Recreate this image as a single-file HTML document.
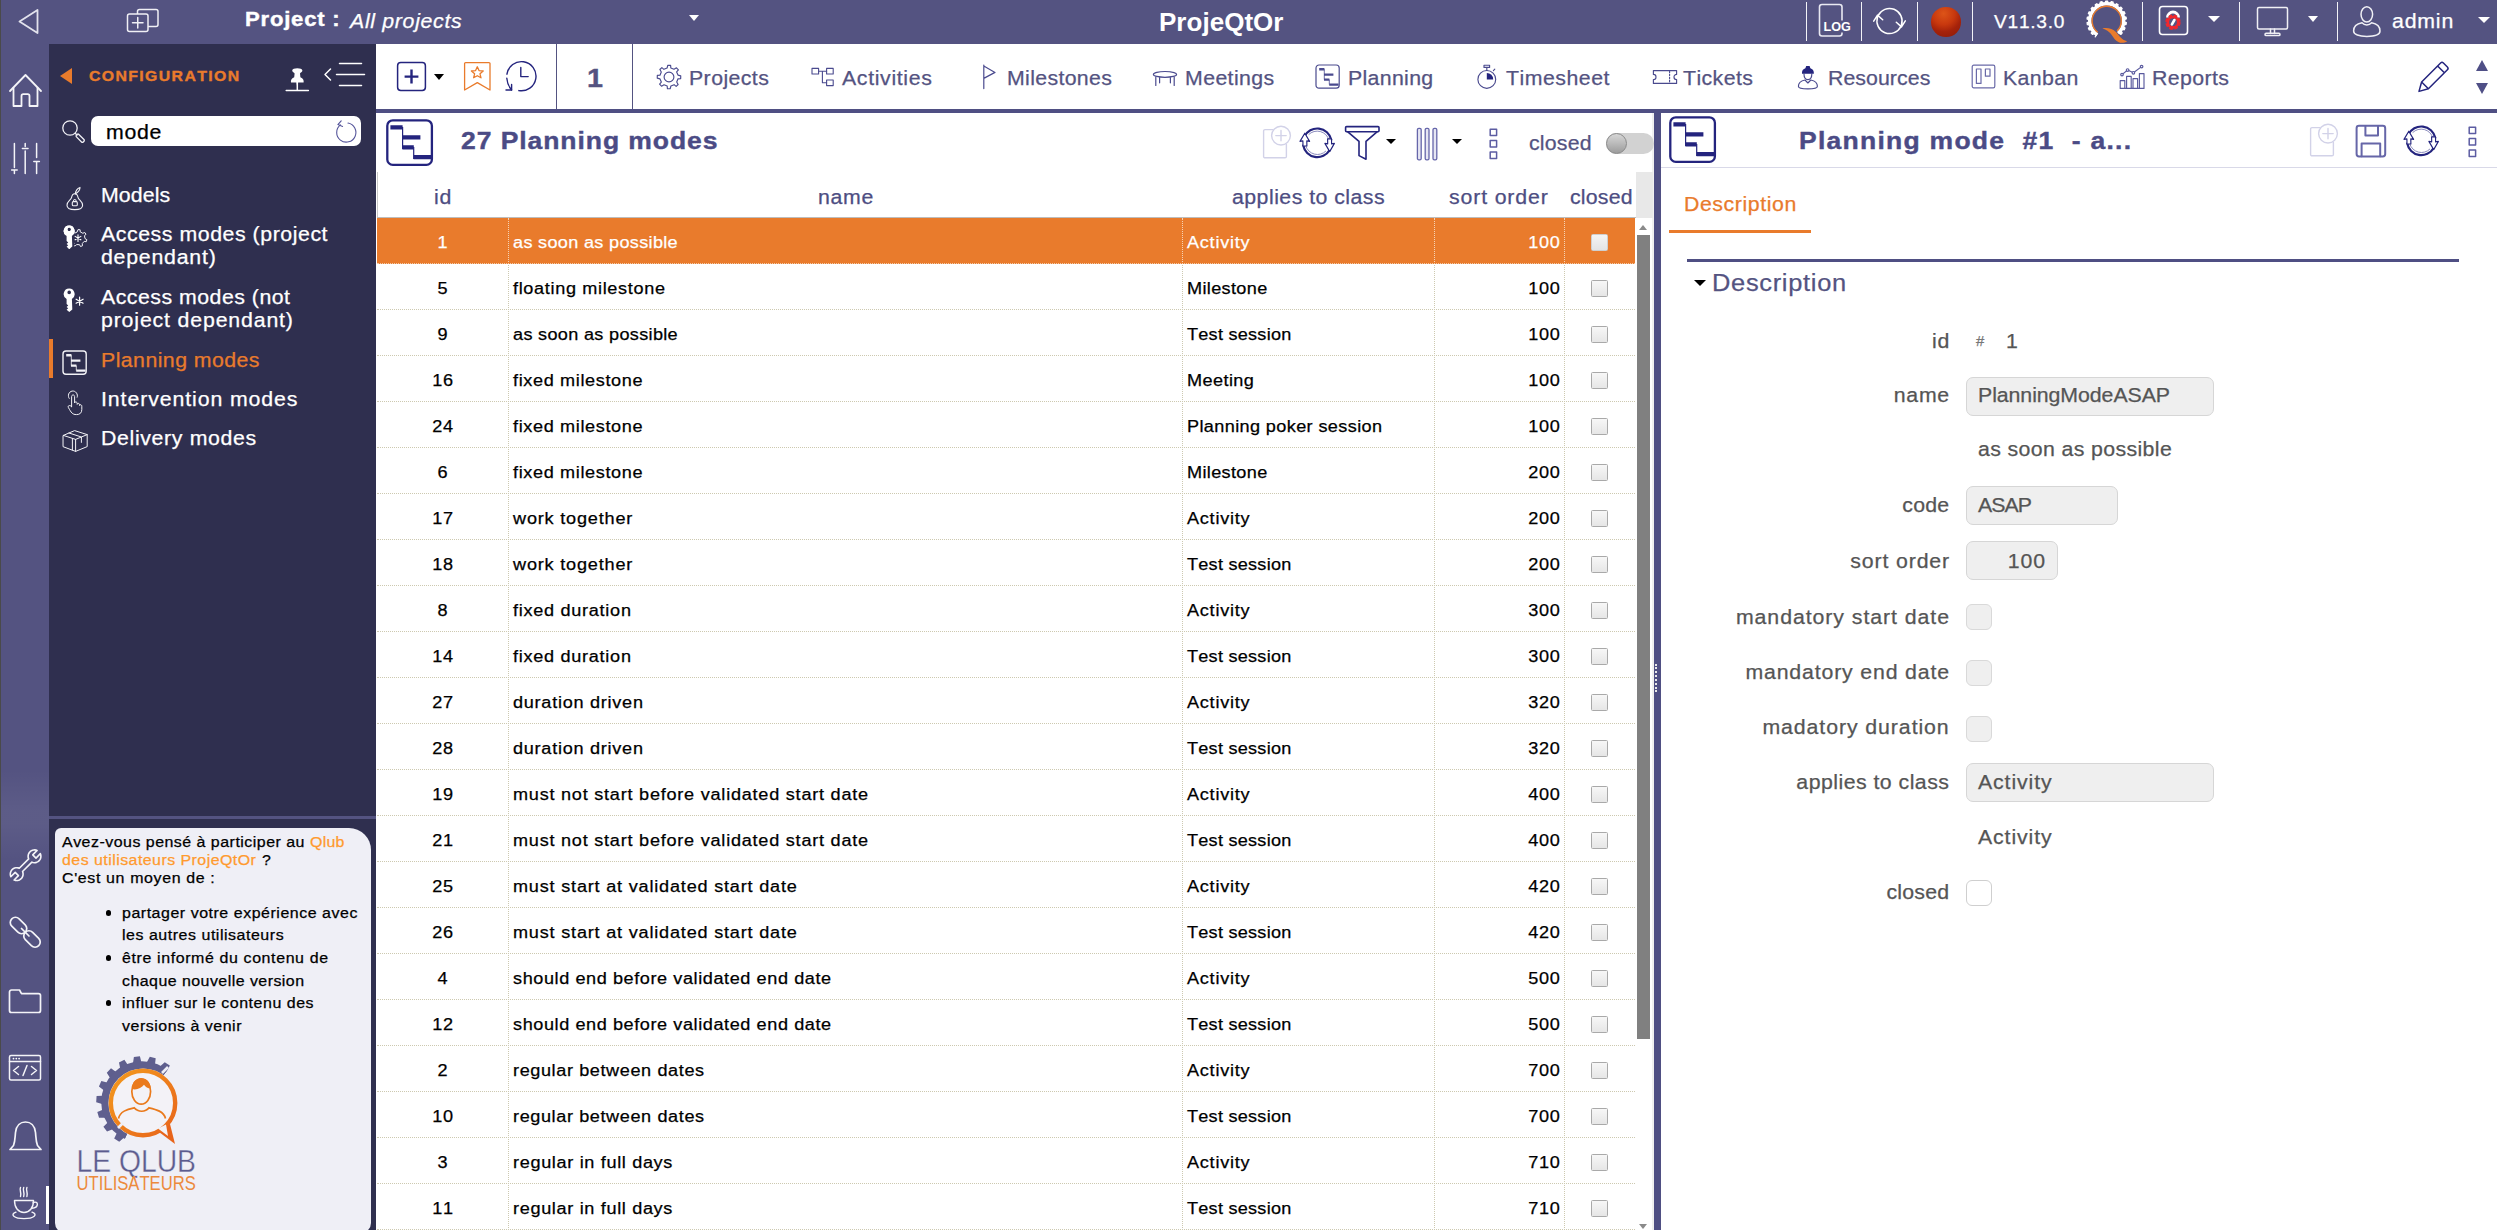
<!DOCTYPE html>
<html><head><meta charset="utf-8"><title>ProjeQtOr</title><style>
html,body{margin:0;padding:0;}
body{width:2497px;height:1230px;overflow:hidden;background:#fff;position:relative;font-family:"Liberation Sans",sans-serif;font-kerning:none;}
div,span,svg{position:absolute;box-sizing:border-box;}
span{white-space:nowrap;line-height:1em;}
</style></head><body>
<div style="left:0px;top:0px;width:2497px;height:44px;background:#545381;"></div>
<div style="left:0px;top:44px;width:49px;height:1186px;background:#545381;"></div>
<div style="left:1px;top:770px;width:48px;height:90px;background:linear-gradient(to bottom,rgba(255,255,255,0),rgba(255,255,255,0.05) 45%,rgba(255,255,255,0.05) 60%,rgba(255,255,255,0));"></div>
<div style="left:0px;top:0px;width:1px;height:1230px;background:#4a4a4a;"></div>
<div style="left:49px;top:44px;width:327px;height:1186px;background:#2f2f4f;"></div>
<div style="left:376px;top:44px;width:2121px;height:65px;background:#fff;"></div>
<div style="left:376px;top:109px;width:2121px;height:4px;background:#4f4f83;"></div>
<div style="left:556px;top:44px;width:1px;height:65px;background:#545381;"></div>
<div style="left:632px;top:44px;width:1px;height:65px;background:#545381;"></div>
<div style="left:1654px;top:113px;width:7px;height:1117px;background:#4f4f83;"></div>
<div style="left:1652px;top:113px;width:2px;height:1117px;background:#f0f0f0;"></div>
<div style="left:1655px;top:664px;width:2px;height:28px;border-left:2px dotted #e8e8e8;"></div>
<span id="t1" style="top:9.09px;font-size:20.1px;color:#fff;font-weight:bold;-webkit-text-stroke:0.4px;letter-spacing:0.706px;left:244.50px;transform:scaleX(1.1);transform-origin:0 0;">Project :</span>
<span id="t2" style="top:10.69px;font-size:20.1px;color:#fff;-webkit-text-stroke:0.25px;font-style:italic;letter-spacing:0.642px;left:349.70px;transform:scaleX(1.06);transform-origin:0 0;">All projects</span>
<span id="t3" style="top:8.69px;font-size:26px;color:#fff;font-weight:bold;letter-spacing:0.028px;left:1159.00px;">ProjeQtOr</span>
<span id="t4" style="top:13.29px;font-size:18.09px;color:#fff;-webkit-text-stroke:0.25px;letter-spacing:0.693px;left:1994.10px;transform:scaleX(1.06);transform-origin:0 0;">V11.3.0</span>
<span id="t5" style="top:11.09px;font-size:20.1px;color:#fff;-webkit-text-stroke:0.25px;letter-spacing:0.766px;left:2392.30px;transform:scaleX(1.06);transform-origin:0 0;">admin</span>
<div style="left:1806px;top:2px;width:1.2px;height:39px;background:#f2f2f7;"></div>
<div style="left:1861px;top:2px;width:1.2px;height:39px;background:#f2f2f7;"></div>
<div style="left:1917px;top:2px;width:1.2px;height:39px;background:#f2f2f7;"></div>
<div style="left:1972px;top:2px;width:1.2px;height:39px;background:#f2f2f7;"></div>
<div style="left:2142px;top:2px;width:1.2px;height:39px;background:#f2f2f7;"></div>
<div style="left:2239px;top:2px;width:1.2px;height:39px;background:#f2f2f7;"></div>
<div style="left:2337px;top:2px;width:1.2px;height:39px;background:#f2f2f7;"></div>
<span id="t6" style="top:68.85px;font-size:14px;color:#e97b2c;font-weight:bold;letter-spacing:1.219px;left:88.60px;transform:scaleX(1.13);transform-origin:0 0;-webkit-text-stroke:0.35px;">CONFIGURATION</span>
<div style="left:91px;top:116px;width:270px;height:30px;background:#fff;border-radius:7px;"></div>
<span id="t7" style="top:122.09px;font-size:20.1px;color:#000;-webkit-text-stroke:0.25px;letter-spacing:0.636px;left:105.50px;transform:scaleX(1.06);transform-origin:0 0;">mode</span>
<span id="t8" style="top:184.59px;font-size:20.1px;color:#fff;-webkit-text-stroke:0.25px;letter-spacing:0.096px;left:101.30px;transform:scaleX(1.06);transform-origin:0 0;">Models</span>
<span id="t9" style="top:223.59px;font-size:20.1px;color:#fff;-webkit-text-stroke:0.25px;letter-spacing:0.523px;left:101.30px;transform:scaleX(1.06);transform-origin:0 0;">Access modes (project</span>
<span id="t10" style="top:247.29px;font-size:20.1px;color:#fff;-webkit-text-stroke:0.25px;letter-spacing:0.729px;left:101.30px;transform:scaleX(1.06);transform-origin:0 0;">dependant)</span>
<span id="t11" style="top:286.69px;font-size:20.1px;color:#fff;-webkit-text-stroke:0.25px;letter-spacing:0.466px;left:101.30px;transform:scaleX(1.06);transform-origin:0 0;">Access modes (not</span>
<span id="t12" style="top:310.39px;font-size:20.1px;color:#fff;-webkit-text-stroke:0.25px;letter-spacing:0.795px;left:101.30px;transform:scaleX(1.06);transform-origin:0 0;">project dependant)</span>
<span id="t13" style="top:349.69px;font-size:20.1px;color:#e97b2c;-webkit-text-stroke:0.25px;letter-spacing:0.415px;left:101.30px;transform:scaleX(1.06);transform-origin:0 0;">Planning modes</span>
<span id="t14" style="top:388.69px;font-size:20.1px;color:#fff;-webkit-text-stroke:0.25px;letter-spacing:0.853px;left:101.30px;transform:scaleX(1.06);transform-origin:0 0;">Intervention modes</span>
<span id="t15" style="top:427.69px;font-size:20.1px;color:#fff;-webkit-text-stroke:0.25px;letter-spacing:0.613px;left:101.30px;transform:scaleX(1.06);transform-origin:0 0;">Delivery modes</span>
<div style="left:49px;top:339px;width:4px;height:39px;background:#e97b2c;"></div>
<div style="left:49px;top:816px;width:327px;height:3px;background:#545381;"></div>
<div style="left:55px;top:828px;width:316px;height:404.5px;background:#efeff6;border-radius:6px 22px 10px 10px;"></div>
<span id="t16" style="top:834.14px;font-size:15.07px;color:#000;-webkit-text-stroke:0.25px;letter-spacing:0.453px;left:61.85px;transform:scaleX(1.06);transform-origin:0 0;white-space:pre;">Avez-vous pensé à participer au </span>
<span id="t17" style="top:834.14px;font-size:15.07px;color:#ff9a2e;-webkit-text-stroke:0.25px;letter-spacing:0.240px;left:309.77px;transform:scaleX(1.06);transform-origin:0 0;">Qlub</span>
<span id="t18" style="top:852.04px;font-size:15.07px;color:#ff9a2e;-webkit-text-stroke:0.25px;letter-spacing:0.420px;left:61.85px;transform:scaleX(1.06);transform-origin:0 0;">des utilisateurs ProjeQtOr</span>
<span id="t19" style="top:852.04px;font-size:15.07px;color:#000;-webkit-text-stroke:0.25px;letter-spacing:-0.678px;left:261.50px;transform:scaleX(1.06);transform-origin:0 0;">?</span>
<span id="t20" style="top:870.34px;font-size:15.07px;color:#000;-webkit-text-stroke:0.25px;letter-spacing:0.590px;left:61.85px;transform:scaleX(1.06);transform-origin:0 0;">C&#x27;est un moyen de :</span>
<span id="t21" style="top:904.74px;font-size:15.07px;color:#000;-webkit-text-stroke:0.25px;letter-spacing:0.497px;left:122.25px;transform:scaleX(1.06);transform-origin:0 0;">partager votre expérience avec</span>
<div style="left:105.7px;top:909.8px;width:5.8px;height:5.8px;background:#000;border-radius:50%;"></div>
<span id="t22" style="top:927.39px;font-size:15.07px;color:#000;-webkit-text-stroke:0.25px;letter-spacing:0.499px;left:122.25px;transform:scaleX(1.06);transform-origin:0 0;">les autres utilisateurs</span>
<span id="t23" style="top:950.04px;font-size:15.07px;color:#000;-webkit-text-stroke:0.25px;letter-spacing:0.573px;left:122.25px;transform:scaleX(1.06);transform-origin:0 0;">être informé du contenu de</span>
<div style="left:105.7px;top:955.0999999999999px;width:5.8px;height:5.8px;background:#000;border-radius:50%;"></div>
<span id="t24" style="top:972.69px;font-size:15.07px;color:#000;-webkit-text-stroke:0.25px;letter-spacing:0.422px;left:122.25px;transform:scaleX(1.06);transform-origin:0 0;">chaque nouvelle version</span>
<span id="t25" style="top:995.34px;font-size:15.07px;color:#000;-webkit-text-stroke:0.25px;letter-spacing:0.496px;left:122.25px;transform:scaleX(1.06);transform-origin:0 0;">influer sur le contenu des</span>
<div style="left:105.7px;top:1000.4px;width:5.8px;height:5.8px;background:#000;border-radius:50%;"></div>
<span id="t26" style="top:1017.99px;font-size:15.07px;color:#000;-webkit-text-stroke:0.25px;letter-spacing:0.481px;left:122.25px;transform:scaleX(1.06);transform-origin:0 0;">versions à venir</span>
<div style="left:46px;top:1186px;width:3px;height:38px;background:#fff;"></div>
<span id="t27" style="top:64.98px;font-size:26.13px;color:#545381;font-weight:bold;-webkit-text-stroke:0.4px;letter-spacing:2.274px;left:587.00px;transform:scaleX(1.1);transform-origin:0 0;">1</span>
<span id="t28" style="top:67.59px;font-size:20.1px;color:#545381;-webkit-text-stroke:0.25px;letter-spacing:0.390px;left:688.50px;transform:scaleX(1.06);transform-origin:0 0;">Projects</span>
<span id="t29" style="top:67.59px;font-size:20.1px;color:#545381;-webkit-text-stroke:0.25px;letter-spacing:0.608px;left:842.00px;transform:scaleX(1.06);transform-origin:0 0;">Activities</span>
<span id="t30" style="top:67.59px;font-size:20.1px;color:#545381;-webkit-text-stroke:0.25px;letter-spacing:0.318px;left:1006.70px;transform:scaleX(1.06);transform-origin:0 0;">Milestones</span>
<span id="t31" style="top:67.59px;font-size:20.1px;color:#545381;-webkit-text-stroke:0.25px;letter-spacing:0.373px;left:1185.00px;transform:scaleX(1.06);transform-origin:0 0;">Meetings</span>
<span id="t32" style="top:67.59px;font-size:20.1px;color:#545381;-webkit-text-stroke:0.25px;letter-spacing:0.303px;left:1348.40px;transform:scaleX(1.06);transform-origin:0 0;">Planning</span>
<span id="t33" style="top:67.59px;font-size:20.1px;color:#545381;-webkit-text-stroke:0.25px;letter-spacing:0.476px;left:1506.00px;transform:scaleX(1.06);transform-origin:0 0;">Timesheet</span>
<span id="t34" style="top:67.59px;font-size:20.1px;color:#545381;-webkit-text-stroke:0.25px;letter-spacing:0.380px;left:1683.40px;transform:scaleX(1.06);transform-origin:0 0;">Tickets</span>
<span id="t35" style="top:67.59px;font-size:20.1px;color:#545381;-webkit-text-stroke:0.25px;letter-spacing:0.056px;left:1828.00px;transform:scaleX(1.06);transform-origin:0 0;">Resources</span>
<span id="t36" style="top:67.59px;font-size:20.1px;color:#545381;-webkit-text-stroke:0.25px;letter-spacing:0.352px;left:2003.00px;transform:scaleX(1.06);transform-origin:0 0;">Kanban</span>
<span id="t37" style="top:67.59px;font-size:20.1px;color:#545381;-webkit-text-stroke:0.25px;letter-spacing:0.361px;left:2151.60px;transform:scaleX(1.06);transform-origin:0 0;">Reports</span>
<span id="t38" style="top:128.98px;font-size:24.12px;color:#4b4b85;font-weight:bold;-webkit-text-stroke:0.4px;letter-spacing:0.843px;left:461.10px;transform:scaleX(1.1);transform-origin:0 0;">27 Planning modes</span>
<span id="t39" style="top:133.09px;font-size:20.1px;color:#545381;-webkit-text-stroke:0.25px;letter-spacing:0.198px;left:1528.60px;transform:scaleX(1.06);transform-origin:0 0;">closed</span>
<div style="left:1606px;top:133px;width:47.5px;height:21px;background:#d2d2d2;border-radius:11px;"></div>
<div style="left:1606px;top:133px;width:21px;height:21px;background:linear-gradient(#d6d6d6,#bdbdbd 45%,#9c9c9c);border-radius:50%;border:1px solid #8a8a8a;"></div>
<span id="t40" style="top:187.29px;font-size:20.1px;color:#4d4d82;-webkit-text-stroke:0.25px;letter-spacing:0.642px;left:242.84px;width:400px;text-align:center;transform:scaleX(1.06);transform-origin:50% 0;">id</span>
<span id="t41" style="top:187.29px;font-size:20.1px;color:#4d4d82;-webkit-text-stroke:0.25px;letter-spacing:0.655px;left:645.85px;width:400px;text-align:center;transform:scaleX(1.06);transform-origin:50% 0;">name</span>
<span id="t42" style="top:187.09px;font-size:20.1px;color:#4d4d82;-webkit-text-stroke:0.25px;letter-spacing:0.440px;left:1231.80px;transform:scaleX(1.06);transform-origin:0 0;">applies to class</span>
<span id="t43" style="top:187.09px;font-size:20.1px;color:#4d4d82;-webkit-text-stroke:0.25px;letter-spacing:0.798px;left:1449.00px;transform:scaleX(1.06);transform-origin:0 0;">sort order</span>
<span id="t44" style="top:187.09px;font-size:20.1px;color:#4d4d82;-webkit-text-stroke:0.25px;letter-spacing:0.198px;left:1569.60px;transform:scaleX(1.06);transform-origin:0 0;">closed</span>
<div style="left:377px;top:172px;width:1px;height:46px;background:#c8c8c8;"></div>
<div style="left:377px;top:217px;width:1259px;height:1px;background:#bdbdbd;"></div>
<div style="left:1636px;top:172px;width:17px;height:46px;background:#e8e8e8;"></div>
<div style="left:1637px;top:235px;width:13px;height:804px;background:#808080;"></div>
<div style="left:1639px;top:225px;width:0;height:0;border-left:4.5px solid transparent;border-right:4.5px solid transparent;border-bottom:5px solid #8a8a8a;"></div>
<div style="left:1639px;top:1223.6px;width:0;height:0;border-left:4.5px solid transparent;border-right:4.5px solid transparent;border-top:5px solid #8a8a8a;"></div>
<div style="left:377px;top:218px;width:1258px;height:46px;background:#e97b2c;"></div>
<div style="left:377px;top:263px;width:1257.5px;height:1px;border-top:1px dotted #f3c9a6;"></div>
<span id="t45" style="top:233.64px;font-size:17.08px;color:#fff;-webkit-text-stroke:0.25px;letter-spacing:0.700px;left:242.87px;width:400px;text-align:center;transform:scaleX(1.06);transform-origin:50% 0;">1</span>
<span id="t46" style="top:233.64px;font-size:17.08px;color:#fff;-webkit-text-stroke:0.25px;letter-spacing:0.298px;left:512.55px;transform:scaleX(1.06);transform-origin:0 0;">as soon as possible</span>
<span id="t47" style="top:233.64px;font-size:17.08px;color:#fff;-webkit-text-stroke:0.25px;letter-spacing:0.706px;left:1187.15px;transform:scaleX(1.06);transform-origin:0 0;">Activity</span>
<span id="t48" style="top:233.64px;font-size:17.08px;color:#fff;-webkit-text-stroke:0.25px;letter-spacing:0.700px;right:936.41px;transform:scaleX(1.06);transform-origin:100% 0;">100</span>
<div style="left:1591px;top:234px;width:17px;height:17px;background:linear-gradient(#f4f4f4,#e4e4e4);border:1.5px solid #cfcfcf;border-radius:1.5px;"></div>
<div style="left:377px;top:309px;width:1257.5px;height:1px;border-top:1px dotted #cdc9b0;"></div>
<span id="t49" style="top:279.64px;font-size:17.08px;color:#000;-webkit-text-stroke:0.25px;letter-spacing:0.700px;left:242.87px;width:400px;text-align:center;transform:scaleX(1.06);transform-origin:50% 0;">5</span>
<span id="t50" style="top:279.64px;font-size:17.08px;color:#000;-webkit-text-stroke:0.25px;letter-spacing:0.616px;left:512.55px;transform:scaleX(1.06);transform-origin:0 0;">floating milestone</span>
<span id="t51" style="top:279.64px;font-size:17.08px;color:#000;-webkit-text-stroke:0.25px;letter-spacing:0.321px;left:1187.15px;transform:scaleX(1.06);transform-origin:0 0;">Milestone</span>
<span id="t52" style="top:279.64px;font-size:17.08px;color:#000;-webkit-text-stroke:0.25px;letter-spacing:0.700px;right:936.41px;transform:scaleX(1.06);transform-origin:100% 0;">100</span>
<div style="left:1591px;top:280px;width:17px;height:17px;background:linear-gradient(#f7f7f7,#e6e6e6);border:1.5px solid #a9a9a9;border-radius:1.5px;"></div>
<div style="left:377px;top:355px;width:1257.5px;height:1px;border-top:1px dotted #cdc9b0;"></div>
<span id="t53" style="top:325.64px;font-size:17.08px;color:#000;-webkit-text-stroke:0.25px;letter-spacing:0.700px;left:242.87px;width:400px;text-align:center;transform:scaleX(1.06);transform-origin:50% 0;">9</span>
<span id="t54" style="top:325.64px;font-size:17.08px;color:#000;-webkit-text-stroke:0.25px;letter-spacing:0.298px;left:512.55px;transform:scaleX(1.06);transform-origin:0 0;">as soon as possible</span>
<span id="t55" style="top:325.64px;font-size:17.08px;color:#000;-webkit-text-stroke:0.25px;letter-spacing:0.232px;left:1187.15px;transform:scaleX(1.06);transform-origin:0 0;">Test session</span>
<span id="t56" style="top:325.64px;font-size:17.08px;color:#000;-webkit-text-stroke:0.25px;letter-spacing:0.700px;right:936.41px;transform:scaleX(1.06);transform-origin:100% 0;">100</span>
<div style="left:1591px;top:326px;width:17px;height:17px;background:linear-gradient(#f7f7f7,#e6e6e6);border:1.5px solid #a9a9a9;border-radius:1.5px;"></div>
<div style="left:377px;top:401px;width:1257.5px;height:1px;border-top:1px dotted #cdc9b0;"></div>
<span id="t57" style="top:371.64px;font-size:17.08px;color:#000;-webkit-text-stroke:0.25px;letter-spacing:0.700px;left:242.87px;width:400px;text-align:center;transform:scaleX(1.06);transform-origin:50% 0;">16</span>
<span id="t58" style="top:371.64px;font-size:17.08px;color:#000;-webkit-text-stroke:0.25px;letter-spacing:0.592px;left:512.55px;transform:scaleX(1.06);transform-origin:0 0;">fixed milestone</span>
<span id="t59" style="top:371.64px;font-size:17.08px;color:#000;-webkit-text-stroke:0.25px;letter-spacing:0.390px;left:1187.15px;transform:scaleX(1.06);transform-origin:0 0;">Meeting</span>
<span id="t60" style="top:371.64px;font-size:17.08px;color:#000;-webkit-text-stroke:0.25px;letter-spacing:0.700px;right:936.41px;transform:scaleX(1.06);transform-origin:100% 0;">100</span>
<div style="left:1591px;top:372px;width:17px;height:17px;background:linear-gradient(#f7f7f7,#e6e6e6);border:1.5px solid #a9a9a9;border-radius:1.5px;"></div>
<div style="left:377px;top:447px;width:1257.5px;height:1px;border-top:1px dotted #cdc9b0;"></div>
<span id="t61" style="top:417.64px;font-size:17.08px;color:#000;-webkit-text-stroke:0.25px;letter-spacing:0.700px;left:242.87px;width:400px;text-align:center;transform:scaleX(1.06);transform-origin:50% 0;">24</span>
<span id="t62" style="top:417.64px;font-size:17.08px;color:#000;-webkit-text-stroke:0.25px;letter-spacing:0.592px;left:512.55px;transform:scaleX(1.06);transform-origin:0 0;">fixed milestone</span>
<span id="t63" style="top:417.64px;font-size:17.08px;color:#000;-webkit-text-stroke:0.25px;letter-spacing:0.353px;left:1187.15px;transform:scaleX(1.06);transform-origin:0 0;">Planning poker session</span>
<span id="t64" style="top:417.64px;font-size:17.08px;color:#000;-webkit-text-stroke:0.25px;letter-spacing:0.700px;right:936.41px;transform:scaleX(1.06);transform-origin:100% 0;">100</span>
<div style="left:1591px;top:418px;width:17px;height:17px;background:linear-gradient(#f7f7f7,#e6e6e6);border:1.5px solid #a9a9a9;border-radius:1.5px;"></div>
<div style="left:377px;top:493px;width:1257.5px;height:1px;border-top:1px dotted #cdc9b0;"></div>
<span id="t65" style="top:463.64px;font-size:17.08px;color:#000;-webkit-text-stroke:0.25px;letter-spacing:0.700px;left:242.87px;width:400px;text-align:center;transform:scaleX(1.06);transform-origin:50% 0;">6</span>
<span id="t66" style="top:463.64px;font-size:17.08px;color:#000;-webkit-text-stroke:0.25px;letter-spacing:0.592px;left:512.55px;transform:scaleX(1.06);transform-origin:0 0;">fixed milestone</span>
<span id="t67" style="top:463.64px;font-size:17.08px;color:#000;-webkit-text-stroke:0.25px;letter-spacing:0.321px;left:1187.15px;transform:scaleX(1.06);transform-origin:0 0;">Milestone</span>
<span id="t68" style="top:463.64px;font-size:17.08px;color:#000;-webkit-text-stroke:0.25px;letter-spacing:0.700px;right:936.41px;transform:scaleX(1.06);transform-origin:100% 0;">200</span>
<div style="left:1591px;top:464px;width:17px;height:17px;background:linear-gradient(#f7f7f7,#e6e6e6);border:1.5px solid #a9a9a9;border-radius:1.5px;"></div>
<div style="left:377px;top:539px;width:1257.5px;height:1px;border-top:1px dotted #cdc9b0;"></div>
<span id="t69" style="top:509.64px;font-size:17.08px;color:#000;-webkit-text-stroke:0.25px;letter-spacing:0.700px;left:242.87px;width:400px;text-align:center;transform:scaleX(1.06);transform-origin:50% 0;">17</span>
<span id="t70" style="top:509.64px;font-size:17.08px;color:#000;-webkit-text-stroke:0.25px;letter-spacing:0.757px;left:512.55px;transform:scaleX(1.06);transform-origin:0 0;">work together</span>
<span id="t71" style="top:509.64px;font-size:17.08px;color:#000;-webkit-text-stroke:0.25px;letter-spacing:0.706px;left:1187.15px;transform:scaleX(1.06);transform-origin:0 0;">Activity</span>
<span id="t72" style="top:509.64px;font-size:17.08px;color:#000;-webkit-text-stroke:0.25px;letter-spacing:0.700px;right:936.41px;transform:scaleX(1.06);transform-origin:100% 0;">200</span>
<div style="left:1591px;top:510px;width:17px;height:17px;background:linear-gradient(#f7f7f7,#e6e6e6);border:1.5px solid #a9a9a9;border-radius:1.5px;"></div>
<div style="left:377px;top:585px;width:1257.5px;height:1px;border-top:1px dotted #cdc9b0;"></div>
<span id="t73" style="top:555.64px;font-size:17.08px;color:#000;-webkit-text-stroke:0.25px;letter-spacing:0.700px;left:242.87px;width:400px;text-align:center;transform:scaleX(1.06);transform-origin:50% 0;">18</span>
<span id="t74" style="top:555.64px;font-size:17.08px;color:#000;-webkit-text-stroke:0.25px;letter-spacing:0.757px;left:512.55px;transform:scaleX(1.06);transform-origin:0 0;">work together</span>
<span id="t75" style="top:555.64px;font-size:17.08px;color:#000;-webkit-text-stroke:0.25px;letter-spacing:0.232px;left:1187.15px;transform:scaleX(1.06);transform-origin:0 0;">Test session</span>
<span id="t76" style="top:555.64px;font-size:17.08px;color:#000;-webkit-text-stroke:0.25px;letter-spacing:0.700px;right:936.41px;transform:scaleX(1.06);transform-origin:100% 0;">200</span>
<div style="left:1591px;top:556px;width:17px;height:17px;background:linear-gradient(#f7f7f7,#e6e6e6);border:1.5px solid #a9a9a9;border-radius:1.5px;"></div>
<div style="left:377px;top:631px;width:1257.5px;height:1px;border-top:1px dotted #cdc9b0;"></div>
<span id="t77" style="top:601.64px;font-size:17.08px;color:#000;-webkit-text-stroke:0.25px;letter-spacing:0.700px;left:242.87px;width:400px;text-align:center;transform:scaleX(1.06);transform-origin:50% 0;">8</span>
<span id="t78" style="top:601.64px;font-size:17.08px;color:#000;-webkit-text-stroke:0.25px;letter-spacing:0.672px;left:512.55px;transform:scaleX(1.06);transform-origin:0 0;">fixed duration</span>
<span id="t79" style="top:601.64px;font-size:17.08px;color:#000;-webkit-text-stroke:0.25px;letter-spacing:0.706px;left:1187.15px;transform:scaleX(1.06);transform-origin:0 0;">Activity</span>
<span id="t80" style="top:601.64px;font-size:17.08px;color:#000;-webkit-text-stroke:0.25px;letter-spacing:0.700px;right:936.41px;transform:scaleX(1.06);transform-origin:100% 0;">300</span>
<div style="left:1591px;top:602px;width:17px;height:17px;background:linear-gradient(#f7f7f7,#e6e6e6);border:1.5px solid #a9a9a9;border-radius:1.5px;"></div>
<div style="left:377px;top:677px;width:1257.5px;height:1px;border-top:1px dotted #cdc9b0;"></div>
<span id="t81" style="top:647.64px;font-size:17.08px;color:#000;-webkit-text-stroke:0.25px;letter-spacing:0.700px;left:242.87px;width:400px;text-align:center;transform:scaleX(1.06);transform-origin:50% 0;">14</span>
<span id="t82" style="top:647.64px;font-size:17.08px;color:#000;-webkit-text-stroke:0.25px;letter-spacing:0.672px;left:512.55px;transform:scaleX(1.06);transform-origin:0 0;">fixed duration</span>
<span id="t83" style="top:647.64px;font-size:17.08px;color:#000;-webkit-text-stroke:0.25px;letter-spacing:0.232px;left:1187.15px;transform:scaleX(1.06);transform-origin:0 0;">Test session</span>
<span id="t84" style="top:647.64px;font-size:17.08px;color:#000;-webkit-text-stroke:0.25px;letter-spacing:0.700px;right:936.41px;transform:scaleX(1.06);transform-origin:100% 0;">300</span>
<div style="left:1591px;top:648px;width:17px;height:17px;background:linear-gradient(#f7f7f7,#e6e6e6);border:1.5px solid #a9a9a9;border-radius:1.5px;"></div>
<div style="left:377px;top:723px;width:1257.5px;height:1px;border-top:1px dotted #cdc9b0;"></div>
<span id="t85" style="top:693.64px;font-size:17.08px;color:#000;-webkit-text-stroke:0.25px;letter-spacing:0.700px;left:242.87px;width:400px;text-align:center;transform:scaleX(1.06);transform-origin:50% 0;">27</span>
<span id="t86" style="top:693.64px;font-size:17.08px;color:#000;-webkit-text-stroke:0.25px;letter-spacing:0.689px;left:512.55px;transform:scaleX(1.06);transform-origin:0 0;">duration driven</span>
<span id="t87" style="top:693.64px;font-size:17.08px;color:#000;-webkit-text-stroke:0.25px;letter-spacing:0.706px;left:1187.15px;transform:scaleX(1.06);transform-origin:0 0;">Activity</span>
<span id="t88" style="top:693.64px;font-size:17.08px;color:#000;-webkit-text-stroke:0.25px;letter-spacing:0.700px;right:936.41px;transform:scaleX(1.06);transform-origin:100% 0;">320</span>
<div style="left:1591px;top:694px;width:17px;height:17px;background:linear-gradient(#f7f7f7,#e6e6e6);border:1.5px solid #a9a9a9;border-radius:1.5px;"></div>
<div style="left:377px;top:769px;width:1257.5px;height:1px;border-top:1px dotted #cdc9b0;"></div>
<span id="t89" style="top:739.64px;font-size:17.08px;color:#000;-webkit-text-stroke:0.25px;letter-spacing:0.700px;left:242.87px;width:400px;text-align:center;transform:scaleX(1.06);transform-origin:50% 0;">28</span>
<span id="t90" style="top:739.64px;font-size:17.08px;color:#000;-webkit-text-stroke:0.25px;letter-spacing:0.689px;left:512.55px;transform:scaleX(1.06);transform-origin:0 0;">duration driven</span>
<span id="t91" style="top:739.64px;font-size:17.08px;color:#000;-webkit-text-stroke:0.25px;letter-spacing:0.232px;left:1187.15px;transform:scaleX(1.06);transform-origin:0 0;">Test session</span>
<span id="t92" style="top:739.64px;font-size:17.08px;color:#000;-webkit-text-stroke:0.25px;letter-spacing:0.700px;right:936.41px;transform:scaleX(1.06);transform-origin:100% 0;">320</span>
<div style="left:1591px;top:740px;width:17px;height:17px;background:linear-gradient(#f7f7f7,#e6e6e6);border:1.5px solid #a9a9a9;border-radius:1.5px;"></div>
<div style="left:377px;top:815px;width:1257.5px;height:1px;border-top:1px dotted #cdc9b0;"></div>
<span id="t93" style="top:785.64px;font-size:17.08px;color:#000;-webkit-text-stroke:0.25px;letter-spacing:0.700px;left:242.87px;width:400px;text-align:center;transform:scaleX(1.06);transform-origin:50% 0;">19</span>
<span id="t94" style="top:785.64px;font-size:17.08px;color:#000;-webkit-text-stroke:0.25px;letter-spacing:0.715px;left:512.55px;transform:scaleX(1.06);transform-origin:0 0;">must not start before validated start date</span>
<span id="t95" style="top:785.64px;font-size:17.08px;color:#000;-webkit-text-stroke:0.25px;letter-spacing:0.706px;left:1187.15px;transform:scaleX(1.06);transform-origin:0 0;">Activity</span>
<span id="t96" style="top:785.64px;font-size:17.08px;color:#000;-webkit-text-stroke:0.25px;letter-spacing:0.700px;right:936.41px;transform:scaleX(1.06);transform-origin:100% 0;">400</span>
<div style="left:1591px;top:786px;width:17px;height:17px;background:linear-gradient(#f7f7f7,#e6e6e6);border:1.5px solid #a9a9a9;border-radius:1.5px;"></div>
<div style="left:377px;top:861px;width:1257.5px;height:1px;border-top:1px dotted #cdc9b0;"></div>
<span id="t97" style="top:831.64px;font-size:17.08px;color:#000;-webkit-text-stroke:0.25px;letter-spacing:0.700px;left:242.87px;width:400px;text-align:center;transform:scaleX(1.06);transform-origin:50% 0;">21</span>
<span id="t98" style="top:831.64px;font-size:17.08px;color:#000;-webkit-text-stroke:0.25px;letter-spacing:0.715px;left:512.55px;transform:scaleX(1.06);transform-origin:0 0;">must not start before validated start date</span>
<span id="t99" style="top:831.64px;font-size:17.08px;color:#000;-webkit-text-stroke:0.25px;letter-spacing:0.232px;left:1187.15px;transform:scaleX(1.06);transform-origin:0 0;">Test session</span>
<span id="t100" style="top:831.64px;font-size:17.08px;color:#000;-webkit-text-stroke:0.25px;letter-spacing:0.700px;right:936.41px;transform:scaleX(1.06);transform-origin:100% 0;">400</span>
<div style="left:1591px;top:832px;width:17px;height:17px;background:linear-gradient(#f7f7f7,#e6e6e6);border:1.5px solid #a9a9a9;border-radius:1.5px;"></div>
<div style="left:377px;top:907px;width:1257.5px;height:1px;border-top:1px dotted #cdc9b0;"></div>
<span id="t101" style="top:877.64px;font-size:17.08px;color:#000;-webkit-text-stroke:0.25px;letter-spacing:0.700px;left:242.87px;width:400px;text-align:center;transform:scaleX(1.06);transform-origin:50% 0;">25</span>
<span id="t102" style="top:877.64px;font-size:17.08px;color:#000;-webkit-text-stroke:0.25px;letter-spacing:0.750px;left:512.55px;transform:scaleX(1.06);transform-origin:0 0;">must start at validated start date</span>
<span id="t103" style="top:877.64px;font-size:17.08px;color:#000;-webkit-text-stroke:0.25px;letter-spacing:0.706px;left:1187.15px;transform:scaleX(1.06);transform-origin:0 0;">Activity</span>
<span id="t104" style="top:877.64px;font-size:17.08px;color:#000;-webkit-text-stroke:0.25px;letter-spacing:0.700px;right:936.41px;transform:scaleX(1.06);transform-origin:100% 0;">420</span>
<div style="left:1591px;top:878px;width:17px;height:17px;background:linear-gradient(#f7f7f7,#e6e6e6);border:1.5px solid #a9a9a9;border-radius:1.5px;"></div>
<div style="left:377px;top:953px;width:1257.5px;height:1px;border-top:1px dotted #cdc9b0;"></div>
<span id="t105" style="top:923.64px;font-size:17.08px;color:#000;-webkit-text-stroke:0.25px;letter-spacing:0.700px;left:242.87px;width:400px;text-align:center;transform:scaleX(1.06);transform-origin:50% 0;">26</span>
<span id="t106" style="top:923.64px;font-size:17.08px;color:#000;-webkit-text-stroke:0.25px;letter-spacing:0.750px;left:512.55px;transform:scaleX(1.06);transform-origin:0 0;">must start at validated start date</span>
<span id="t107" style="top:923.64px;font-size:17.08px;color:#000;-webkit-text-stroke:0.25px;letter-spacing:0.232px;left:1187.15px;transform:scaleX(1.06);transform-origin:0 0;">Test session</span>
<span id="t108" style="top:923.64px;font-size:17.08px;color:#000;-webkit-text-stroke:0.25px;letter-spacing:0.700px;right:936.41px;transform:scaleX(1.06);transform-origin:100% 0;">420</span>
<div style="left:1591px;top:924px;width:17px;height:17px;background:linear-gradient(#f7f7f7,#e6e6e6);border:1.5px solid #a9a9a9;border-radius:1.5px;"></div>
<div style="left:377px;top:999px;width:1257.5px;height:1px;border-top:1px dotted #cdc9b0;"></div>
<span id="t109" style="top:969.64px;font-size:17.08px;color:#000;-webkit-text-stroke:0.25px;letter-spacing:0.700px;left:242.87px;width:400px;text-align:center;transform:scaleX(1.06);transform-origin:50% 0;">4</span>
<span id="t110" style="top:969.64px;font-size:17.08px;color:#000;-webkit-text-stroke:0.25px;letter-spacing:0.544px;left:512.55px;transform:scaleX(1.06);transform-origin:0 0;">should end before validated end date</span>
<span id="t111" style="top:969.64px;font-size:17.08px;color:#000;-webkit-text-stroke:0.25px;letter-spacing:0.706px;left:1187.15px;transform:scaleX(1.06);transform-origin:0 0;">Activity</span>
<span id="t112" style="top:969.64px;font-size:17.08px;color:#000;-webkit-text-stroke:0.25px;letter-spacing:0.700px;right:936.41px;transform:scaleX(1.06);transform-origin:100% 0;">500</span>
<div style="left:1591px;top:970px;width:17px;height:17px;background:linear-gradient(#f7f7f7,#e6e6e6);border:1.5px solid #a9a9a9;border-radius:1.5px;"></div>
<div style="left:377px;top:1045px;width:1257.5px;height:1px;border-top:1px dotted #cdc9b0;"></div>
<span id="t113" style="top:1015.64px;font-size:17.08px;color:#000;-webkit-text-stroke:0.25px;letter-spacing:0.700px;left:242.87px;width:400px;text-align:center;transform:scaleX(1.06);transform-origin:50% 0;">12</span>
<span id="t114" style="top:1015.64px;font-size:17.08px;color:#000;-webkit-text-stroke:0.25px;letter-spacing:0.544px;left:512.55px;transform:scaleX(1.06);transform-origin:0 0;">should end before validated end date</span>
<span id="t115" style="top:1015.64px;font-size:17.08px;color:#000;-webkit-text-stroke:0.25px;letter-spacing:0.232px;left:1187.15px;transform:scaleX(1.06);transform-origin:0 0;">Test session</span>
<span id="t116" style="top:1015.64px;font-size:17.08px;color:#000;-webkit-text-stroke:0.25px;letter-spacing:0.700px;right:936.41px;transform:scaleX(1.06);transform-origin:100% 0;">500</span>
<div style="left:1591px;top:1016px;width:17px;height:17px;background:linear-gradient(#f7f7f7,#e6e6e6);border:1.5px solid #a9a9a9;border-radius:1.5px;"></div>
<div style="left:377px;top:1091px;width:1257.5px;height:1px;border-top:1px dotted #cdc9b0;"></div>
<span id="t117" style="top:1061.64px;font-size:17.08px;color:#000;-webkit-text-stroke:0.25px;letter-spacing:0.700px;left:242.87px;width:400px;text-align:center;transform:scaleX(1.06);transform-origin:50% 0;">2</span>
<span id="t118" style="top:1061.64px;font-size:17.08px;color:#000;-webkit-text-stroke:0.25px;letter-spacing:0.564px;left:512.55px;transform:scaleX(1.06);transform-origin:0 0;">regular between dates</span>
<span id="t119" style="top:1061.64px;font-size:17.08px;color:#000;-webkit-text-stroke:0.25px;letter-spacing:0.706px;left:1187.15px;transform:scaleX(1.06);transform-origin:0 0;">Activity</span>
<span id="t120" style="top:1061.64px;font-size:17.08px;color:#000;-webkit-text-stroke:0.25px;letter-spacing:0.700px;right:936.41px;transform:scaleX(1.06);transform-origin:100% 0;">700</span>
<div style="left:1591px;top:1062px;width:17px;height:17px;background:linear-gradient(#f7f7f7,#e6e6e6);border:1.5px solid #a9a9a9;border-radius:1.5px;"></div>
<div style="left:377px;top:1137px;width:1257.5px;height:1px;border-top:1px dotted #cdc9b0;"></div>
<span id="t121" style="top:1107.64px;font-size:17.08px;color:#000;-webkit-text-stroke:0.25px;letter-spacing:0.700px;left:242.87px;width:400px;text-align:center;transform:scaleX(1.06);transform-origin:50% 0;">10</span>
<span id="t122" style="top:1107.64px;font-size:17.08px;color:#000;-webkit-text-stroke:0.25px;letter-spacing:0.564px;left:512.55px;transform:scaleX(1.06);transform-origin:0 0;">regular between dates</span>
<span id="t123" style="top:1107.64px;font-size:17.08px;color:#000;-webkit-text-stroke:0.25px;letter-spacing:0.232px;left:1187.15px;transform:scaleX(1.06);transform-origin:0 0;">Test session</span>
<span id="t124" style="top:1107.64px;font-size:17.08px;color:#000;-webkit-text-stroke:0.25px;letter-spacing:0.700px;right:936.41px;transform:scaleX(1.06);transform-origin:100% 0;">700</span>
<div style="left:1591px;top:1108px;width:17px;height:17px;background:linear-gradient(#f7f7f7,#e6e6e6);border:1.5px solid #a9a9a9;border-radius:1.5px;"></div>
<div style="left:377px;top:1183px;width:1257.5px;height:1px;border-top:1px dotted #cdc9b0;"></div>
<span id="t125" style="top:1153.64px;font-size:17.08px;color:#000;-webkit-text-stroke:0.25px;letter-spacing:0.700px;left:242.87px;width:400px;text-align:center;transform:scaleX(1.06);transform-origin:50% 0;">3</span>
<span id="t126" style="top:1153.64px;font-size:17.08px;color:#000;-webkit-text-stroke:0.25px;letter-spacing:0.619px;left:512.55px;transform:scaleX(1.06);transform-origin:0 0;">regular in full days</span>
<span id="t127" style="top:1153.64px;font-size:17.08px;color:#000;-webkit-text-stroke:0.25px;letter-spacing:0.706px;left:1187.15px;transform:scaleX(1.06);transform-origin:0 0;">Activity</span>
<span id="t128" style="top:1153.64px;font-size:17.08px;color:#000;-webkit-text-stroke:0.25px;letter-spacing:0.700px;right:936.41px;transform:scaleX(1.06);transform-origin:100% 0;">710</span>
<div style="left:1591px;top:1154px;width:17px;height:17px;background:linear-gradient(#f7f7f7,#e6e6e6);border:1.5px solid #a9a9a9;border-radius:1.5px;"></div>
<div style="left:377px;top:1229px;width:1257.5px;height:1px;border-top:1px dotted #cdc9b0;"></div>
<span id="t129" style="top:1199.64px;font-size:17.08px;color:#000;-webkit-text-stroke:0.25px;letter-spacing:0.700px;left:242.87px;width:400px;text-align:center;transform:scaleX(1.06);transform-origin:50% 0;">11</span>
<span id="t130" style="top:1199.64px;font-size:17.08px;color:#000;-webkit-text-stroke:0.25px;letter-spacing:0.619px;left:512.55px;transform:scaleX(1.06);transform-origin:0 0;">regular in full days</span>
<span id="t131" style="top:1199.64px;font-size:17.08px;color:#000;-webkit-text-stroke:0.25px;letter-spacing:0.232px;left:1187.15px;transform:scaleX(1.06);transform-origin:0 0;">Test session</span>
<span id="t132" style="top:1199.64px;font-size:17.08px;color:#000;-webkit-text-stroke:0.25px;letter-spacing:0.700px;right:936.41px;transform:scaleX(1.06);transform-origin:100% 0;">710</span>
<div style="left:1591px;top:1200px;width:17px;height:17px;background:linear-gradient(#f7f7f7,#e6e6e6);border:1.5px solid #a9a9a9;border-radius:1.5px;"></div>
<div style="left:508px;top:218px;width:1px;height:1012px;border-left:1px dotted #cdc9b0;"></div>
<div style="left:508px;top:218px;width:1px;height:46px;border-left:1px dotted #f6d3b4;"></div>
<div style="left:1182px;top:218px;width:1px;height:1012px;border-left:1px dotted #cdc9b0;"></div>
<div style="left:1182px;top:218px;width:1px;height:46px;border-left:1px dotted #f6d3b4;"></div>
<div style="left:1434px;top:218px;width:1px;height:1012px;border-left:1px dotted #cdc9b0;"></div>
<div style="left:1434px;top:218px;width:1px;height:46px;border-left:1px dotted #f6d3b4;"></div>
<div style="left:1564px;top:218px;width:1px;height:1012px;border-left:1px dotted #cdc9b0;"></div>
<div style="left:1564px;top:218px;width:1px;height:46px;border-left:1px dotted #f6d3b4;"></div>
<span id="t133" style="top:129.28px;font-size:24.12px;color:#4b4b85;font-weight:bold;-webkit-text-stroke:0.4px;letter-spacing:1.136px;left:1798.60px;transform:scaleX(1.1);transform-origin:0 0;white-space:pre;">Planning mode  #1  - a...</span>
<div style="left:1661px;top:167px;width:836px;height:1px;background:#d9d9e8;"></div>
<span id="t134" style="top:193.89px;font-size:20.1px;color:#e97b2c;-webkit-text-stroke:0.25px;letter-spacing:0.538px;left:1683.50px;transform:scaleX(1.06);transform-origin:0 0;">Description</span>
<div style="left:1669px;top:230px;width:142px;height:3.4px;background:#e97b2c;"></div>
<div style="left:1687px;top:259px;width:772px;height:3px;background:#4f4f83;"></div>
<div style="left:1693.5px;top:280px;width:0;height:0;border-left:6px solid transparent;border-right:6px solid transparent;border-top:6px solid #000;"></div>
<span id="t135" style="top:270.57px;font-size:24.02px;color:#545381;-webkit-text-stroke:0.25px;letter-spacing:0.641px;left:1712.21px;transform:scaleX(1.06);transform-origin:0 0;">Description</span>
<span id="t136" style="top:331.09px;font-size:20.1px;color:#555;-webkit-text-stroke:0.25px;letter-spacing:0.642px;right:547.12px;transform:scaleX(1.06);transform-origin:100% 0;">id</span>
<span id="t137" style="top:334.39px;font-size:14.07px;color:#777;-webkit-text-stroke:0.25px;letter-spacing:2.976px;left:1975.90px;transform:scaleX(1.06);transform-origin:0 0;">#</span>
<span id="t138" style="top:331.09px;font-size:20.1px;color:#555;-webkit-text-stroke:0.25px;letter-spacing:0.812px;left:2005.70px;transform:scaleX(1.06);transform-origin:0 0;">1</span>
<span id="t139" style="top:385.39px;font-size:20.1px;color:#555;-webkit-text-stroke:0.25px;letter-spacing:0.655px;right:547.11px;transform:scaleX(1.06);transform-origin:100% 0;">name</span>
<div style="left:1966px;top:376.5px;width:248px;height:39px;background:#efefef;border:1px solid #d6d6d6;border-radius:7px;"></div>
<span id="t140" style="top:385.39px;font-size:20.1px;color:#555;-webkit-text-stroke:0.25px;letter-spacing:-0.062px;left:1978.30px;transform:scaleX(1.06);transform-origin:0 0;">PlanningModeASAP</span>
<span id="t141" style="top:439.39px;font-size:20.1px;color:#555;-webkit-text-stroke:0.25px;letter-spacing:0.350px;left:1978.00px;transform:scaleX(1.06);transform-origin:0 0;">as soon as possible</span>
<span id="t142" style="top:495.39px;font-size:20.1px;color:#555;-webkit-text-stroke:0.25px;letter-spacing:0.176px;right:547.61px;transform:scaleX(1.06);transform-origin:100% 0;">code</span>
<div style="left:1966px;top:485.5px;width:152px;height:39px;background:#efefef;border:1px solid #d6d6d6;border-radius:7px;"></div>
<span id="t143" style="top:495.39px;font-size:20.1px;color:#555;-webkit-text-stroke:0.25px;letter-spacing:-0.883px;left:1978.00px;transform:scaleX(1.06);transform-origin:0 0;">ASAP</span>
<span id="t144" style="top:550.99px;font-size:20.1px;color:#555;-webkit-text-stroke:0.25px;letter-spacing:0.798px;right:546.95px;transform:scaleX(1.06);transform-origin:100% 0;">sort order</span>
<div style="left:1966px;top:541px;width:92px;height:39px;background:#efefef;border:1px solid #d6d6d6;border-radius:7px;"></div>
<span id="t145" style="top:550.99px;font-size:20.1px;color:#555;-webkit-text-stroke:0.25px;letter-spacing:0.823px;right:451.13px;transform:scaleX(1.06);transform-origin:100% 0;">100</span>
<span id="t146" style="top:606.59px;font-size:20.1px;color:#555;-webkit-text-stroke:0.25px;letter-spacing:0.885px;right:546.86px;transform:scaleX(1.06);transform-origin:100% 0;">mandatory start date</span>
<div style="left:1966px;top:604px;width:26px;height:26px;background:#efefef;border:1px solid #d9d9d9;border-radius:6px;"></div>
<span id="t147" style="top:662.49px;font-size:20.1px;color:#555;-webkit-text-stroke:0.25px;letter-spacing:0.784px;right:546.97px;transform:scaleX(1.06);transform-origin:100% 0;">mandatory end date</span>
<div style="left:1966px;top:659.5px;width:26px;height:26px;background:#efefef;border:1px solid #d9d9d9;border-radius:6px;"></div>
<span id="t148" style="top:716.69px;font-size:20.1px;color:#555;-webkit-text-stroke:0.25px;letter-spacing:0.863px;right:546.89px;transform:scaleX(1.06);transform-origin:100% 0;">madatory duration</span>
<div style="left:1966px;top:715.5px;width:26px;height:26px;background:#efefef;border:1px solid #d9d9d9;border-radius:6px;"></div>
<span id="t149" style="top:772.09px;font-size:20.1px;color:#555;-webkit-text-stroke:0.25px;letter-spacing:0.440px;right:547.33px;transform:scaleX(1.06);transform-origin:100% 0;">applies to class</span>
<div style="left:1966px;top:762.5px;width:248px;height:39px;background:#efefef;border:1px solid #d6d6d6;border-radius:7px;"></div>
<span id="t150" style="top:772.09px;font-size:20.1px;color:#555;-webkit-text-stroke:0.25px;letter-spacing:0.830px;left:1978.00px;transform:scaleX(1.06);transform-origin:0 0;">Activity</span>
<span id="t151" style="top:827.09px;font-size:20.1px;color:#555;-webkit-text-stroke:0.25px;letter-spacing:0.830px;left:1978.00px;transform:scaleX(1.06);transform-origin:0 0;">Activity</span>
<span id="t152" style="top:882.09px;font-size:20.1px;color:#555;-webkit-text-stroke:0.25px;letter-spacing:0.198px;right:547.59px;transform:scaleX(1.06);transform-origin:100% 0;">closed</span>
<div style="left:1966px;top:879.5px;width:26px;height:26px;background:#fff;border:1px solid #cfcfcf;border-radius:6px;"></div>
<svg style="left:17.2px;top:8.3px;" width="23" height="27" viewBox="0 0 23 27" fill="none"><g stroke="#e2e2ec" stroke-width="1.8" fill="none" stroke-linecap="round" stroke-linejoin="round" ><path d="M20.5 2 L2.5 13.5 L20.5 25 Z"/></g></svg>
<svg style="left:126px;top:8px;" width="34" height="26" viewBox="0 0 34 26" fill="none"><g stroke="#f0f0f5" stroke-width="1.5" fill="none" stroke-linecap="round" stroke-linejoin="round" ><rect x="11.5" y="1.5" width="20.5" height="17" rx="2"/><rect x="1.5" y="6" width="20.5" height="17.5" rx="2" fill="#545381"/><path d="M6.5 14.8 H17 M11.75 9.5 V20"/></g></svg>
<div style="left:689px;top:15px;width:0;height:0;border-left:5.75px solid transparent;border-right:5.75px solid transparent;border-top:6px solid #fff;"></div>
<svg style="left:1818px;top:3px;" width="36" height="36" viewBox="0 0 36 36" fill="none"><g stroke="#e9e9f2" stroke-width="1.6" fill="none" stroke-linecap="round" stroke-linejoin="round" ><rect x="1.5" y="1.5" width="22.5" height="31.5" rx="2.5"/></g><rect x="5" y="17.5" width="31" height="12" fill="#545381"/><text x="5.6" y="28.2" font-family="Liberation Sans" font-weight="bold" font-size="12.6" fill="#fff">LOG</text></svg>
<svg style="left:1872px;top:5.5px;" width="36" height="32" viewBox="0 0 36 32" fill="none"><g stroke="#fff" stroke-width="1.5" fill="none" stroke-linecap="round" stroke-linejoin="round" ><path d="M6.08 9.68 A12.6 12.6 0 0 1 29.48 18.89 M28.92 20.32 A12.6 12.6 0 0 1 5.52 11.11 M24.3 16.3 L29.5 20.9 L33.3 14.9 M1.7 15.1 L5.5 9.1 L10.7 13.7"/></g></svg>
<div style="left:1931px;top:7px;width:29.5px;height:29.5px;border-radius:50%;background:radial-gradient(circle at 42% 22%,#dd5418 0%,#c8380e 38%,#a5220a 62%,#8a1a08 100%);"></div>
<svg style="left:2085.5px;top:0px;" width="44" height="46" viewBox="0 0 44 46" fill="none"><defs><clipPath id="qclip"><path d="M20.7 20.8 L-1.7 54.0 L-20 60 L-20 -20 L64 -20 L64 60 L48.0 50.1 Z"/></clipPath></defs><g clip-path="url(#qclip)"><path d="M38.28 21.72 L40.32 22.62 L40.05 24.51 L37.90 24.51 L37.30 26.64 L39.01 28.07 L38.22 29.81 L36.16 29.21 L34.99 31.08 L36.22 32.93 L34.97 34.38 L33.17 33.22 L31.51 34.69 L32.17 36.81 L30.57 37.85 L29.16 36.23 L27.16 37.17 L27.20 39.40 L25.36 39.94 L24.47 37.99 L22.29 38.33 L21.69 40.47 L19.78 40.48 L19.48 38.36 L17.29 38.07 L16.11 39.96 L14.27 39.42 L14.58 37.30 L12.56 36.40 L10.90 37.89 L9.29 36.86 L10.18 34.91 L8.49 33.48 L6.48 34.44 L5.23 32.99 L6.63 31.37 L5.42 29.53 L3.22 29.88 L2.42 28.14 L4.22 26.98 L3.58 24.87 L1.37 24.58 L1.09 22.69 L3.15 22.09 L3.12 19.88 L1.08 18.98 L1.35 17.09 L3.50 17.09 L4.10 14.96 L2.39 13.53 L3.18 11.79 L5.24 12.39 L6.41 10.52 L5.18 8.67 L6.43 7.22 L8.23 8.38 L9.89 6.91 L9.23 4.79 L10.83 3.75 L12.24 5.37 L14.24 4.43 L14.20 2.20 L16.04 1.66 L16.93 3.61 L19.11 3.27 L19.71 1.13 L21.62 1.12 L21.92 3.24 L24.11 3.53 L25.29 1.64 L27.13 2.18 L26.82 4.30 L28.84 5.20 L30.50 3.71 L32.11 4.74 L31.22 6.69 L32.91 8.12 L34.92 7.16 L36.17 8.61 L34.77 10.23 L35.98 12.07 L38.18 11.72 L38.98 13.46 L37.18 14.62 L37.82 16.73 L40.03 17.02 L40.31 18.91 L38.25 19.51 Z" fill="#fff" stroke="#fff" stroke-width="1.3" stroke-linejoin="round"/><circle cx="20.7" cy="20.8" r="16.9" stroke="#fff" stroke-width="3.6" fill="none"/></g><circle cx="20.7" cy="20.8" r="15.2" fill="#545381"/><path d="M11.71 32.30 A14.6 14.6 0 1 1 31.02 31.12" stroke="#e97b2c" stroke-width="1.4" fill="none"/><path d="M16.3 28.3 C21 27.2 26.6 28.4 30 32 C33 35.2 35.2 40 41.2 41.2 C37.6 43.8 32.4 43.4 29.2 39.8 C26.4 36.6 24.6 31 16.3 28.3 Z" fill="#e97b2c"/></svg>
<svg style="left:2158px;top:5px;" width="32" height="32" viewBox="0 0 32 32" fill="none"><g stroke="#fff" stroke-width="1.6" fill="none" stroke-linecap="round" stroke-linejoin="round" ><rect x="1.5" y="1.5" width="28" height="28" rx="3"/></g><path d="M9.4 12.6 A5.6 5.6 0 0 1 20.6 12.6" stroke="#fff" stroke-width="2.8" fill="none"/><circle cx="15" cy="17.2" r="6" stroke="#f0282e" stroke-width="3.4" stroke-dasharray="3.2 1.5" fill="none"/><circle cx="15" cy="17.2" r="5.2" stroke="#f0282e" stroke-width="2.6" fill="none"/><path d="M13.9 19.4 L16.4 15" stroke="#fff" stroke-width="2.6" stroke-linecap="round"/></svg>
<div style="left:2207.5px;top:16px;width:0;height:0;border-left:6.0px solid transparent;border-right:6.0px solid transparent;border-top:6.2px solid #fff;"></div>
<svg style="left:2255.5px;top:5.5px;" width="34" height="31" viewBox="0 0 34 31" fill="none"><g stroke="#f0f0f5" stroke-width="1.5" fill="none" stroke-linecap="round" stroke-linejoin="round" ><rect x="1.5" y="1.5" width="30" height="21.5" rx="1.5"/><path d="M14.5 23 V27.5 M18.5 23 V27.5"/><rect x="9" y="27.3" width="15" height="2.2" rx="1.1"/></g></svg>
<div style="left:2307.5px;top:16px;width:0;height:0;border-left:5.75px solid transparent;border-right:5.75px solid transparent;border-top:6.2px solid #fff;"></div>
<svg style="left:2351.5px;top:5px;" width="30" height="34" viewBox="0 0 30 34" fill="none"><g stroke="#f0f0f5" stroke-width="1.5" fill="none" stroke-linecap="round" stroke-linejoin="round" ><ellipse cx="14.8" cy="9.3" rx="5.8" ry="7.6"/><path d="M1.6 26 C1.6 20.5 5.5 18.6 10 17.8 C12.6 20.6 17 20.6 19.6 17.8 C24.2 18.6 28 20.5 28 26 C28 29.6 22.5 31.4 14.8 31.4 C7.1 31.4 1.6 29.6 1.6 26 Z"/></g></svg>
<div style="left:2477.5px;top:17px;width:0;height:0;border-left:6.0px solid transparent;border-right:6.0px solid transparent;border-top:6.2px solid #fff;"></div>
<svg style="left:8px;top:72px;" width="36" height="37" viewBox="0 0 36 37" fill="none"><g stroke="#f4f4f8" stroke-width="1.8" fill="none" stroke-linecap="round" stroke-linejoin="round" ><path d="M2 19 L17.5 3 L33 19"/><path d="M5.5 15.8 V34 H13.5 V24 A1.8 1.8 0 0 1 15.3 22.2 H19.7 A1.8 1.8 0 0 1 21.5 24 V34 H29.5 V15.8"/></g></svg>
<svg style="left:10px;top:142px;" width="32" height="34" viewBox="0 0 32 34" fill="none"><g stroke="#f4f4f8" stroke-width="1.5" fill="none" stroke-linecap="round" stroke-linejoin="round" ><path d="M4.4 1.5 V25.5 M4.4 28.6 V31.5 M1.6 28 H7.2 M15.2 1.5 V4.6 M15.2 9 V31.5 M12.4 6.6 H18 M26.6 1.5 V15.6 M26.6 20.4 V31.5 M23.8 19.6 H29.4"/></g></svg>
<svg style="left:8px;top:847px;" width="36" height="37" viewBox="0 0 36 37" fill="none"><g stroke="#f4f4f8" stroke-width="1.6" fill="none" stroke-linecap="round" stroke-linejoin="round" ><path d="M20.66 11.89 L20.28 10.77 L20.12 9.59 L20.17 8.41 L20.44 7.26 L20.92 6.18 L21.59 5.20 L22.42 4.37 L23.40 3.70 L24.48 3.22 L25.63 2.95 L26.81 2.90 L27.99 3.06 L29.11 3.44 L24.74 7.81 L27.99 11.06 L32.36 6.69 L32.74 7.81 L32.90 8.99 L32.85 10.17 L32.58 11.32 L32.10 12.40 L31.43 13.38 L30.60 14.21 L29.62 14.88 L28.54 15.36 L27.39 15.63 L26.21 15.68 L25.03 15.52 L23.91 15.14 L14.54 24.51 L14.92 25.63 L15.08 26.81 L15.03 27.99 L14.76 29.14 L14.28 30.22 L13.61 31.20 L12.78 32.03 L11.80 32.70 L10.72 33.18 L9.57 33.45 L8.39 33.50 L7.21 33.34 L6.09 32.96 L10.46 28.59 L7.21 25.34 L2.84 29.71 L2.46 28.59 L2.30 27.41 L2.35 26.23 L2.62 25.08 L3.10 24.00 L3.77 23.02 L4.60 22.19 L5.58 21.52 L6.66 21.04 L7.81 20.77 L8.99 20.72 L10.17 20.88 L11.29 21.26 Z"/></g></svg>
<svg style="left:8px;top:915px;" width="35" height="35" viewBox="0 0 35 35" fill="none"><g stroke="#f4f4f8" stroke-width="1.7" fill="none" stroke-linecap="round" stroke-linejoin="round" ><rect x="-9.5" y="-5.2" width="19" height="10.4" rx="5.2" transform="translate(10.5 10.5) rotate(45)"/><rect x="-9.5" y="-5.2" width="19" height="10.4" rx="5.2" transform="translate(24 24) rotate(45)"/><path d="M13.5 13.5 L21 21"/></g></svg>
<svg style="left:8px;top:988px;" width="35" height="27" viewBox="0 0 35 27" fill="none"><g stroke="#f4f4f8" stroke-width="1.7" fill="none" stroke-linecap="round" stroke-linejoin="round" ><path d="M1.5 4 A2 2 0 0 1 3.5 2 H11.5 L13.5 5.6 H30.5 A2 2 0 0 1 32.5 7.6 V22.5 A2 2 0 0 1 30.5 24.5 H3.5 A2 2 0 0 1 1.5 22.5 Z"/></g></svg>
<svg style="left:8px;top:1053.5px;" width="35" height="28" viewBox="0 0 35 28" fill="none"><g stroke="#f4f4f8" stroke-width="1.5" fill="none" stroke-linecap="round" stroke-linejoin="round" ><rect x="1.5" y="1.5" width="31" height="24.5" rx="1.5"/><path d="M1.5 7.5 H32.5"/><path d="M10.5 12.5 L5.5 16.5 L10.5 20.5 M23.5 12.5 L28.5 16.5 L23.5 20.5 M19 11.5 L15 21.5"/></g><circle cx="5.5" cy="4.6" r=".9" fill="#fff"/><circle cx="8.3" cy="4.6" r=".9" fill="#fff"/><circle cx="11.1" cy="4.6" r=".9" fill="#fff"/></svg>
<svg style="left:8px;top:1119.5px;" width="36" height="32" viewBox="0 0 36 32" fill="none"><g stroke="#f4f4f8" stroke-width="1.7" fill="none" stroke-linecap="round" stroke-linejoin="round" ><path d="M2 29.5 H33 L29.5 25.5 C27.8 21 28 17 27.5 12.5 C26.8 5.5 22.5 2 17.5 2 C12.5 2 8.2 5.5 7.5 12.5 C7 17 7.2 21 5.5 25.5 Z"/></g></svg>
<svg style="left:11px;top:1186px;" width="30" height="34" viewBox="0 0 30 34" fill="none"><g stroke="#f4f4f8" stroke-width="1.4" fill="none" stroke-linecap="round" stroke-linejoin="round" ><path d="M3.5 14.5 H22.5 C22.5 22 18.5 26.5 13 26.5 C7.5 26.5 3.5 22 3.5 14.5 Z"/><path d="M22.3 16.5 C27.5 14.5 28.5 21.5 20.8 22.3"/><path d="M5 26.2 C-1.5 28.5 3 32.6 13 32.6 C23 32.6 27.5 28.5 21 26.2"/><path d="M9.5 1.5 C8 4.5 11 7 9.5 10.5 M12.7 1.5 C11.2 4.5 14.2 7 12.7 10.5 M15.9 1.5 C14.4 4.5 17.4 7 15.9 10.5"/></g></svg>
<div style="left:59.5px;top:67.5px;width:0;height:0;border-top:8.5px solid transparent;border-bottom:8.5px solid transparent;border-right:12.5px solid #e97b2c;"></div>
<svg style="left:285px;top:67px;" width="25" height="26" viewBox="0 0 25 26" fill="none"><path d="M7.2 3.6 C7.2 0.6 17.4 0.6 17.4 3.6 C17.4 5.2 15.4 5.6 15 6.6 L15.4 10.2 C18.2 11.4 19 13.6 18.6 15.4 H13.1 L12.3 21 H12.3 L11.5 15.4 H6 C5.6 13.6 6.4 11.4 9.2 10.2 L9.6 6.6 C9.2 5.6 7.2 5.2 7.2 3.6 Z" fill="#fff"/><path d="M12.3 15 V23 M1.2 23.6 H23.4" stroke="#fff" stroke-width="1.5" stroke-linecap="round"/></svg>
<svg style="left:323px;top:62px;" width="45" height="26" viewBox="0 0 45 26" fill="none"><g stroke="#fff" stroke-width="1.5" fill="none" stroke-linecap="round" stroke-linejoin="round" ><path d="M7.5 7 L2 12.5 L7.5 18 M16.5 1.5 H38.5 M13.5 12.5 H41.5 M16.5 23.5 H38.5"/></g></svg>
<svg style="left:60.5px;top:119px;" width="26" height="26" viewBox="0 0 26 26" fill="none"><g stroke="#f0f0f5" stroke-width="1.3" fill="none" stroke-linecap="round" stroke-linejoin="round" ><circle cx="9" cy="9" r="7.2"/><rect x="-1.7" y="-4.8" width="3.4" height="9.6" rx="1.2" transform="translate(19.2 19.2) rotate(-45)"/><path d="M14.2 14.2 L16 16"/></g></svg>
<svg style="left:334px;top:119px;" width="24" height="25" viewBox="0 0 24 25" fill="none"><g stroke="#54549a" stroke-width="1.1" fill="none" stroke-linecap="round" stroke-linejoin="round" ><path d="M13.97 4.05 A9.6 9.6 0 1 1 6.39 5.94"/><path d="M7.2 1.8 L3.9 5.6 L8.6 7.4"/></g></svg>
<svg style="left:65px;top:186px;" width="20" height="25" viewBox="0 0 20 25" fill="none"><g stroke="#f2f2f6" stroke-width="1.1" fill="none" stroke-linecap="round" stroke-linejoin="round" ><path d="M9.8 7.8 C7.6 7.8 6.9 9.6 6.5 11.6 C6 13.9 2 15.2 2 19.2 C2 22.3 5.5 23.6 9.8 23.6 C14.1 23.6 17.6 22.3 17.6 19.2 C17.6 15.2 13.6 13.9 13.1 11.6 C12.7 9.6 12 7.8 9.8 7.8 Z"/><path d="M10.3 8 C10.6 5 12.6 2.2 15 1.4 C15.2 3.6 13.5 6 10.3 8 Z"/><rect x="7.3" y="15.6" width="5" height="4.2" rx="1.1"/><path d="M8.4 15.4 C8.4 12.8 11.2 12.8 11.2 15.4"/></g></svg>
<svg style="left:63px;top:224.5px;" width="26" height="26" viewBox="0 0 26 26" fill="none"><path d="M6.2 0.6 A5.6 5.6 0 0 1 8.9 11 L9.3 21.6 L6.3 24 L3.6 21.8 L5.2 20.3 L3.6 18.9 L5.2 17.4 L3.6 16 L3.6 11.1 A5.6 5.6 0 0 1 6.2 0.6 Z M6.2 2.6 A1.8 1.8 0 0 0 6.2 6.2 A1.8 1.8 0 0 0 6.2 2.6 Z" fill="#fff" fill-rule="evenodd"/><g stroke="#f2f2f6" stroke-width="1.0" fill="none" stroke-linecap="round" stroke-linejoin="round" ><path d="M14.25 6.70 L14.98 4.61 L17.13 4.78 L17.19 6.85 L19.77 8.25 L21.85 7.52 L23.06 9.30 L21.48 10.64 L21.99 13.53 L23.87 14.70 L23.23 16.76 L21.20 16.36 L19.25 18.56 L19.51 20.76 L17.50 21.54 L16.55 19.70 L13.61 19.55 L12.05 21.12 L10.19 20.04 L11.03 18.15 L9.32 15.76 L7.12 15.52 L6.80 13.39 L8.81 12.87 L9.60 10.04 L8.42 8.17 L9.89 6.60 L11.55 7.84 Z"/></g><rect x="3" y="7" width="8.2" height="16" fill="#2f2f4f"/><path d="M6.2 0.6 A5.6 5.6 0 0 1 8.9 11 L9.3 21.6 L6.3 24 L3.6 21.8 L5.2 20.3 L3.6 18.9 L5.2 17.4 L3.6 16 L3.6 11.1 A5.6 5.6 0 0 1 6.2 0.6 Z M6.2 2.6 A1.8 1.8 0 0 0 6.2 6.2 A1.8 1.8 0 0 0 6.2 2.6 Z" fill="#fff" fill-rule="evenodd"/><g stroke="#fff" stroke-width="1.1" fill="none" stroke-linecap="round" stroke-linejoin="round" ><path d="M15 9.8 V16.4 M12.1 11.4 L17.9 14.8 M17.9 11.4 L12.1 14.8"/></g></svg>
<svg style="left:63px;top:288px;" width="24" height="26" viewBox="0 0 24 26" fill="none"><path d="M6.2 0.6 A5.6 5.6 0 0 1 8.9 11 L9.3 21.6 L6.3 24 L3.6 21.8 L5.2 20.3 L3.6 18.9 L5.2 17.4 L3.6 16 L3.6 11.1 A5.6 5.6 0 0 1 6.2 0.6 Z M6.2 2.6 A1.8 1.8 0 0 0 6.2 6.2 A1.8 1.8 0 0 0 6.2 2.6 Z" fill="#fff" fill-rule="evenodd"/><g stroke="#fff" stroke-width="1.2" fill="none" stroke-linecap="round" stroke-linejoin="round" ><path d="M16.6 9.2 V17.2 M13.1 11.2 L20.1 15.2 M20.1 11.2 L13.1 15.2"/></g></svg>
<svg style="left:61.5px;top:350.2px;" width="26" height="26" viewBox="0 0 26 26" fill="none"><g stroke="#f2f2f6" stroke-width="1.4" fill="none" stroke-linecap="round" stroke-linejoin="round" ><rect x="1" y="1" width="23.2" height="23.2" rx="3"/></g><path d="M4.2 5.2 H9.4 M9 10.6 H18.4 M9 15.6 H14.4 M14.2 20.6 H23.6" stroke="#f2f2f6" stroke-width="2.4"/><path d="M9.3 5.2 V15.6 M14.3 15.6 V20.6" stroke="#f2f2f6" stroke-width="0.8"/></svg>
<svg style="left:66px;top:389.5px;" width="18" height="26" viewBox="0 0 18 26" fill="none"><g stroke="#f2f2f6" stroke-width="1.0" fill="none" stroke-linecap="round" stroke-linejoin="round" ><path d="M3.2 8.4 A4.6 4.6 0 1 1 11.2 7.2"/><path d="M5.6 16.6 V6.6 C5.6 4.4 8.6 4.4 8.6 6.6 V13 C8.6 11.4 11.2 11.6 11.2 13.4 V14.4 C11.2 12.8 13.6 13 13.6 14.8 V15.6 C13.6 14.2 15.8 14.4 15.8 16.2 V19.4 C15.8 23 13.8 24.6 10.4 24.6 C6.4 24.6 5.2 22.6 2.4 17.6 C1.4 15.8 3.6 14.4 5.6 16.6 Z"/></g></svg>
<svg style="left:62px;top:429px;" width="27" height="24" viewBox="0 0 27 24" fill="none"><g stroke="#f2f2f6" stroke-width="1.0" fill="none" stroke-linecap="round" stroke-linejoin="round" ><path d="M1.4 6.4 L12.6 1.6 L25.2 5.6 V17.6 L13.6 22.4 L1.4 17.8 Z"/><path d="M1.4 6.4 L13.6 10.4 L25.2 5.6 M13.6 10.4 V22.4 M7 4 L19.4 8 V13.4 M10.4 9.6 V21"/></g></svg>
<svg style="left:396px;top:61px;" width="32" height="32" viewBox="0 0 32 32" fill="none"><g stroke="#24247e" stroke-width="1.5" fill="none" stroke-linecap="round" stroke-linejoin="round" ><rect x="1.6" y="1.6" width="27.8" height="27.8" rx="3.2"/></g><path d="M8.6 15.6 H22.4 M15.5 8.6 V22.6" stroke="#24247e" stroke-width="2.4"/></svg>
<div style="left:434px;top:73.5px;width:0;height:0;border-left:5.2px solid transparent;border-right:5.2px solid transparent;border-top:6px solid #000;"></div>
<svg style="left:463px;top:61px;" width="30" height="32" viewBox="0 0 30 32" fill="none"><g stroke="#e97b2c" stroke-width="1.3" fill="none" stroke-linecap="round" stroke-linejoin="round" ><path d="M1.6 2.6 A1 1 0 0 1 2.6 1.6 H26 A1 1 0 0 1 27 2.6 V29 L14.3 21.6 L1.6 29 Z"/><path d="M14.3 5.8 L16 9.6 L20.2 10 L17 12.8 L18 16.8 L14.3 14.7 L10.6 16.8 L11.6 12.8 L8.4 10 L12.6 9.6 Z"/></g></svg>
<svg style="left:504px;top:60px;" width="34" height="34" viewBox="0 0 34 34" fill="none"><g stroke="#24247e" stroke-width="1.4" fill="none" stroke-linecap="round" stroke-linejoin="round" ><path d="M2.94 14.17 A14.6 14.6 0 1 1 14.86 30.58"/><path d="M16.8 7.4 V16.6 H24.2"/><path d="M7.6 24.4 V30 H2"/><path d="M2.8 18.2 C3.2 23 5 27 7.6 30"/></g></svg>
<svg style="left:656px;top:64px;" width="26" height="26" viewBox="0 0 26 26" fill="none"><g stroke="#4a4a8e" stroke-width="1.15" fill="none" stroke-linecap="round" stroke-linejoin="round" ><path d="M22.00 11.09 L24.74 11.83 L24.69 14.60 L22.02 14.82 L20.72 18.01 L22.13 20.47 L20.13 22.40 L18.09 20.66 L14.91 22.00 L14.17 24.74 L11.40 24.69 L11.18 22.02 L7.99 20.72 L5.53 22.13 L3.60 20.13 L5.34 18.09 L4.00 14.91 L1.26 14.17 L1.31 11.40 L3.98 11.18 L5.28 7.99 L3.87 5.53 L5.87 3.60 L7.91 5.34 L11.09 4.00 L11.83 1.26 L14.60 1.31 L14.82 3.98 L18.01 5.28 L20.47 3.87 L22.40 5.87 L20.66 7.91 Z"/><circle cx="13" cy="13" r="4.9"/></g></svg>
<svg style="left:811px;top:66.5px;" width="24" height="21" viewBox="0 0 24 21" fill="none"><g stroke="#4a4a8e" stroke-width="1.1" fill="none" stroke-linecap="round" stroke-linejoin="round" ><rect x="1" y="1.4" width="6.6" height="5.6"/><rect x="15.6" y="1.4" width="6.6" height="5.6"/><rect x="15.6" y="13" width="6.6" height="5.6"/><path d="M7.6 4.2 H15.6 M11.4 4.2 V15.8 H15.6"/></g></svg>
<svg style="left:981.5px;top:64px;" width="16" height="26" viewBox="0 0 16 26" fill="none"><g stroke="#4a4a8e" stroke-width="1.2" fill="none" stroke-linecap="round" stroke-linejoin="round" ><path d="M1.8 1 V24.6 M1.8 2 L13 8.4 L1.8 14.4"/></g></svg>
<svg style="left:1152px;top:69.5px;" width="26" height="17" viewBox="0 0 26 17" fill="none"><g stroke="#4a4a8e" stroke-width="1.2" fill="none" stroke-linecap="round" stroke-linejoin="round" ><ellipse cx="13" cy="4.4" rx="11.6" ry="2.9"/><path d="M3.8 6.8 V15.4 M22.2 6.8 V15.4 M7.6 7.6 V12.8 M18.4 7.6 V12.8"/></g></svg>
<svg style="left:1315.4px;top:64.3px;" width="26" height="26" viewBox="0 0 26 26" fill="none"><g stroke="#4a4a8e" stroke-width="1.2" fill="none" stroke-linecap="round" stroke-linejoin="round" ><rect x="1" y="1" width="23.2" height="23.2" rx="3"/></g><path d="M4.2 5.2 H9.4 M9 10.6 H18.4 M9 15.6 H14.4 M14.2 20.6 H23.6" stroke="#4a4a8e" stroke-width="2.4"/><path d="M9.3 5.2 V15.6 M14.3 15.6 V20.6" stroke="#4a4a8e" stroke-width="0.8"/></svg>
<svg style="left:1476px;top:64px;" width="22" height="26" viewBox="0 0 22 26" fill="none"><g stroke="#4a4a8e" stroke-width="1.15" fill="none" stroke-linecap="round" stroke-linejoin="round" ><circle cx="10.8" cy="15.4" r="8.9"/><path d="M8 1.2 H13.6 V3.4 H8 Z M10.8 3.6 V6.4 M17.4 6.6 L18.8 5.2"/></g><path d="M10.8 15.4 V9 A6.4 6.4 0 0 1 17.2 15.4 Z" fill="#24247e"/></svg>
<svg style="left:1652px;top:69px;" width="26" height="17" viewBox="0 0 26 17" fill="none"><g stroke="#4a4a8e" stroke-width="1.15" fill="none" stroke-linecap="round" stroke-linejoin="round" ><path d="M1.4 1.6 H24.6 V5.4 A2.6 2.6 0 0 0 24.6 10.6 V14.4 H1.4 V10.6 A2.6 2.6 0 0 0 1.4 5.4 Z"/><path d="M17.6 2.4 V14" stroke-dasharray="1.3 1.6"/></g></svg>
<svg style="left:1797px;top:65px;" width="22" height="25" viewBox="0 0 22 25" fill="none"><g stroke="#4a4a8e" stroke-width="1.15" fill="none" stroke-linecap="round" stroke-linejoin="round" ><path d="M7 9 C7 16.4 14.8 16.4 14.8 9"/><path d="M1.4 21.2 C1.4 17.4 4.4 15.8 8 15 L10.9 18 L13.8 15 C17.4 15.8 20.4 17.4 20.4 21.2 C20.4 23.4 16.4 23.8 10.9 23.8 C5.4 23.8 1.4 23.4 1.4 21.2 Z"/></g><path d="M5 8.8 H16.8 V7.6 C16.8 5.4 15.4 3.8 13.4 3.2 L12.6 1 H9.2 L8.4 3.2 C6.4 3.8 5 5.4 5 7.6 Z" fill="#24247e"/></svg>
<svg style="left:1971px;top:64px;" width="26" height="26" viewBox="0 0 26 26" fill="none"><g stroke="#6a6aa8" stroke-width="1.2" fill="none" stroke-linecap="round" stroke-linejoin="round" ><rect x="1.2" y="1.2" width="22.6" height="22.6" rx="1.6"/><rect x="5.4" y="5" width="4.6" height="14.4"/><rect x="14.4" y="5" width="4.6" height="7.2"/></g></svg>
<svg style="left:2119px;top:64px;" width="27" height="26" viewBox="0 0 27 26" fill="none"><g stroke="#5a5a9e" stroke-width="1.15" fill="none" stroke-linecap="round" stroke-linejoin="round" ><path d="M1.2 24.4 V16.6 H5.8 V24.4 M7.6 24.4 V12.4 H12.2 V24.4 M14 24.4 V14.6 H18.6 V24.4 M20.4 24.4 V9.6 H25 V24.4 M1.2 24.4 H25"/><path d="M3 10.6 L8.6 6 L14.4 8.8 L22.6 2.6"/><circle cx="3" cy="10.6" r="1.3" fill="#fff"/><circle cx="8.6" cy="6" r="1.3" fill="#fff"/><circle cx="14.4" cy="8.8" r="1.3" fill="#fff"/><circle cx="22.6" cy="2.6" r="1.3" fill="#fff"/></g></svg>
<svg style="left:2416.6px;top:60px;" width="34" height="34" viewBox="0 0 34 34" fill="none"><g stroke="#24247e" stroke-width="1.5" fill="none" stroke-linecap="round" stroke-linejoin="round" ><path d="M2 31.4 L4.6 22 L23.6 3 A2 2 0 0 1 26.4 3 L30.4 7 A2 2 0 0 1 30.4 9.8 L11.4 28.8 Z M4.6 22 L11.4 28.8 M20.6 6 L27.4 12.8"/></g></svg>
<div style="left:2476px;top:59.5px;width:0;height:0;border-left:6.2px solid transparent;border-right:6.2px solid transparent;border-bottom:11.5px solid #4f4f86;"></div>
<div style="left:2476px;top:82.5px;width:0;height:0;border-left:6.2px solid transparent;border-right:6.2px solid transparent;border-top:11.5px solid #4f4f86;"></div>
<svg style="left:386.2px;top:118.8px;" width="49" height="49" viewBox="0 0 49 49" fill="none"><g stroke="#24247e" stroke-width="2.3" fill="none" stroke-linecap="round" stroke-linejoin="round" ><rect x="1.3" y="1.3" width="44.6" height="44.6" rx="5.5"/></g><path d="M4.4 8.3 H16.6 M16.4 18.4 H34.4 M16.4 28.3 H27.8 M27.6 38.2 H46" stroke="#24247e" stroke-width="4.2"/><path d="M16.6 8 V30 M27.7 28 V40" stroke="#24247e" stroke-width="1.2"/></svg>
<svg style="left:1669.2px;top:116.2px;" width="49" height="49" viewBox="0 0 49 49" fill="none"><g stroke="#24247e" stroke-width="2.3" fill="none" stroke-linecap="round" stroke-linejoin="round" ><rect x="1.3" y="1.3" width="44.6" height="44.6" rx="5.5"/></g><path d="M4.4 8.3 H16.6 M16.4 18.4 H34.4 M16.4 28.3 H27.8 M27.6 38.2 H46" stroke="#24247e" stroke-width="4.2"/><path d="M16.6 8 V30 M27.7 28 V40" stroke="#24247e" stroke-width="1.2"/></svg>
<svg style="left:1262.4px;top:125px;" width="31" height="35" viewBox="0 0 31 35" fill="none"><g stroke="#d2d2e8" stroke-width="1.4" fill="none" stroke-linecap="round" stroke-linejoin="round" ><path d="M11 4.6 H3 A1.4 1.4 0 0 0 1.6 6 V31.4 A1.4 1.4 0 0 0 3 32.8 H23 A1.4 1.4 0 0 0 24.4 31.4 V19.4"/><circle cx="19" cy="10.6" r="9.4" fill="#fff"/><path d="M19 5.4 V15.8 M13.8 10.6 H24.2"/></g></svg>
<svg style="left:2308.6px;top:122.6px;" width="31" height="35" viewBox="0 0 31 35" fill="none"><g stroke="#d2d2e8" stroke-width="1.4" fill="none" stroke-linecap="round" stroke-linejoin="round" ><path d="M11 4.6 H3 A1.4 1.4 0 0 0 1.6 6 V31.4 A1.4 1.4 0 0 0 3 32.8 H23 A1.4 1.4 0 0 0 24.4 31.4 V19.4"/><circle cx="19" cy="10.6" r="9.4" fill="#fff"/><path d="M19 5.4 V15.8 M13.8 10.6 H24.2"/></g></svg>
<svg style="left:1299.4px;top:125.7px;" width="37" height="35" viewBox="0 0 37 35" fill="none"><g stroke="#24247e" stroke-width="2.2" fill="none" stroke-linecap="round" stroke-linejoin="round" ><path d="M5.34 10.76 A14.3 14.3 0 0 1 32.29 13.83"/><path d="M30.68 23.95 A14.3 14.3 0 0 1 4.22 19.28"/></g><g stroke="#8a8abc" stroke-width="1.0" fill="none" stroke-linecap="round" stroke-linejoin="round" ><path d="M9.89 8.39 A11.9 11.9 0 0 1 29.79 13.72"/><path d="M26.71 25.21 A11.9 11.9 0 0 1 6.81 19.88"/></g><g stroke="#24247e" stroke-width="1.15" fill="none" stroke-linecap="round" stroke-linejoin="round" ><path d="M5.8 7.2 L10.6 15.4 L7.8 14.9 L7.9 20 L4 20 L3.9 14.9 L1 15.4 Z M30.7 25.6 L25.9 17.4 L28.7 17.9 L28.6 12.8 L32.5 12.8 L32.6 17.9 L35.4 17.4 Z" fill="#fff"/></g></svg>
<svg style="left:2403.2px;top:123.5px;" width="37" height="35" viewBox="0 0 37 35" fill="none"><g stroke="#24247e" stroke-width="2.2" fill="none" stroke-linecap="round" stroke-linejoin="round" ><path d="M5.34 10.76 A14.3 14.3 0 0 1 32.29 13.83"/><path d="M30.68 23.95 A14.3 14.3 0 0 1 4.22 19.28"/></g><g stroke="#8a8abc" stroke-width="1.0" fill="none" stroke-linecap="round" stroke-linejoin="round" ><path d="M9.89 8.39 A11.9 11.9 0 0 1 29.79 13.72"/><path d="M26.71 25.21 A11.9 11.9 0 0 1 6.81 19.88"/></g><g stroke="#24247e" stroke-width="1.15" fill="none" stroke-linecap="round" stroke-linejoin="round" ><path d="M5.8 7.2 L10.6 15.4 L7.8 14.9 L7.9 20 L4 20 L3.9 14.9 L1 15.4 Z M30.7 25.6 L25.9 17.4 L28.7 17.9 L28.6 12.8 L32.5 12.8 L32.6 17.9 L35.4 17.4 Z" fill="#fff"/></g></svg>
<svg style="left:1344px;top:125px;" width="37" height="37" viewBox="0 0 37 37" fill="none"><g stroke="#24247e" stroke-width="1.6" fill="none" stroke-linecap="round" stroke-linejoin="round" ><rect x="1.6" y="1.6" width="33.4" height="5.2" rx="1"/><path d="M3.8 6.8 L15 16.4 V30.6 L22 34.2 V16.4 L33 6.8"/></g></svg>
<div style="left:1385.6px;top:139.4px;width:0;height:0;border-left:5.4px solid transparent;border-right:5.4px solid transparent;border-top:5.8px solid #000;"></div>
<svg style="left:1416px;top:126.6px;" width="25" height="35" viewBox="0 0 25 35" fill="none"><g stroke="#6666aa" stroke-width="1.3" fill="none" stroke-linecap="round" stroke-linejoin="round" ><rect x="1.4" y="1.4" width="3.8" height="31.4" rx="1.4" fill="#e6e6f3"/><rect x="9.2" y="1.4" width="3.8" height="31.4" rx="1.4" fill="#e6e6f3"/><rect x="17" y="1.4" width="3.8" height="31.4" rx="1.4" fill="#e6e6f3"/></g></svg>
<div style="left:1451.6px;top:139.4px;width:0;height:0;border-left:5.4px solid transparent;border-right:5.4px solid transparent;border-top:5.8px solid #000;"></div>
<svg style="left:1489px;top:127.6px;" width="10" height="32" viewBox="0 0 10 32" fill="none"><g stroke="#5c5ca2" stroke-width="1.5" fill="none" stroke-linecap="round" stroke-linejoin="round" ><rect x="1.2" y="1.2" width="6.4" height="6.4"/><rect x="1.2" y="12.6" width="6.4" height="6.4"/><rect x="1.2" y="24" width="6.4" height="6.4"/></g></svg>
<svg style="left:2468px;top:125.6px;" width="10" height="32" viewBox="0 0 10 32" fill="none"><g stroke="#5c5ca2" stroke-width="1.5" fill="none" stroke-linecap="round" stroke-linejoin="round" ><rect x="1.2" y="1.2" width="6.4" height="6.4"/><rect x="1.2" y="12.6" width="6.4" height="6.4"/><rect x="1.2" y="24" width="6.4" height="6.4"/></g></svg>
<svg style="left:2355px;top:124px;" width="33" height="35" viewBox="0 0 33 35" fill="none"><g stroke="#6666a8" stroke-width="2.0" fill="none" stroke-linecap="round" stroke-linejoin="round" ><rect x="1.6" y="1.8" width="28.6" height="30.6" rx="2.4"/><path d="M10.4 2 V11.4 H23 V2"/><path d="M6.6 32.2 V19.4 H25.2 V32.2"/></g></svg>
<svg style="left:95.6px;top:1056.4px;" width="96" height="96" viewBox="0 0 96 96" fill="none"><defs><clipPath id="gclip"><path d="M46 46 L106 -29 L-20 -20 L-20 120 L18 106 Z"/></clipPath><linearGradient id="og" x1="0" y1="0" x2="1" y2="1"><stop offset="0" stop-color="#f39a1e"/><stop offset="1" stop-color="#e8641a"/></linearGradient></defs><g clip-path="url(#gclip)"><path d="M27.84 81.64 L23.24 85.74 L18.18 82.38 L20.83 77.09 L16.75 73.28 L11.02 75.56 L7.42 70.68 L11.71 66.60 L9.18 61.63 L3.02 61.81 L1.30 55.99 L6.73 53.63 L6.05 48.09 L0.20 46.16 L0.58 40.10 L6.49 39.74 L7.75 34.31 L2.91 30.49 L5.34 24.92 L11.02 26.61 L14.05 21.93 L10.81 16.68 L15.00 12.29 L19.76 15.81 L24.21 12.45 L22.96 6.42 L28.40 3.72 L31.67 8.66 L37.00 7.03 L37.89 0.92 L43.92 0.25 L45.30 6.01 L50.87 6.30 L53.80 0.87 L59.70 2.30 L59.02 8.18 L64.16 10.36 L68.76 6.26 L73.82 9.62 L71.17 14.91 L75.25 18.72 L80.98 16.44 L84.58 21.32 L80.29 25.40 L82.82 30.37 L88.98 30.19 L90.70 36.01 L85.27 38.37 L85.95 43.91 L91.80 45.84 L91.42 51.90 L85.51 52.26 L84.25 57.69 L89.09 61.51 L86.66 67.08 L80.98 65.39 L77.95 70.07 L81.19 75.32 L77.00 79.71 L72.24 76.19 L67.79 79.55 L69.04 85.58 L63.60 88.28 L60.33 83.34 L55.00 84.97 L54.11 91.08 L48.08 91.75 L46.70 85.99 L41.13 85.70 L38.20 91.13 L32.30 89.70 L32.98 83.82 Z" fill="#5f5f8e"/><circle cx="46" cy="46" r="40.8" fill="#5f5f8e"/></g><circle cx="47" cy="47" r="34.6" fill="#efeff6"/><path d="M63 76 L79 88 L73.5 66 Z" fill="#e8641a"/><circle cx="47" cy="47" r="32.2" stroke="url(#og)" stroke-width="4.4" fill="#f3f2f7"/><path d="M62 72.5 L72 80 L70 68.5 Z" fill="#f3f2f7"/><path d="M66 17 L72 11" stroke="#efeff6" stroke-width="2.6"/><path d="M22 72 L27.5 66.5" stroke="#efeff6" stroke-width="2.6"/><ellipse cx="45.2" cy="35.5" rx="9.4" ry="12.6" stroke="#ea7a1c" stroke-width="1.7" fill="#f3f2f7"/><path d="M36 33 C36 25 41 22.6 45.4 22.6 C50 22.6 54.6 25.4 54.6 32.6 C52 32.4 49.4 31 48 28.8 C45.6 32 40.4 34.4 36 33 Z" fill="#ea7a1c"/><path d="M22.5 62.5 C24 55.5 31 53.4 38.2 51.8 C42 56.4 49.4 56.4 53 51.8 C60 53.4 68 55.5 69.5 62.5" stroke="#ea7a1c" stroke-width="1.7" fill="none"/></svg>
<svg style="left:74px;top:1144px;" width="126" height="50" viewBox="0 0 126 50"><text x="2.4" y="27.6" font-family="Liberation Sans" font-size="31" fill="#5c5c8e" textLength="119.6" lengthAdjust="spacingAndGlyphs" stroke="#efeff6" stroke-width="0.35">LE QLUB</text><text x="2.6" y="46.2" font-family="Liberation Sans" font-size="20.6" fill="#ec8a3c" textLength="119.2" lengthAdjust="spacingAndGlyphs">UTILISATEURS</text></svg>
</body></html>
